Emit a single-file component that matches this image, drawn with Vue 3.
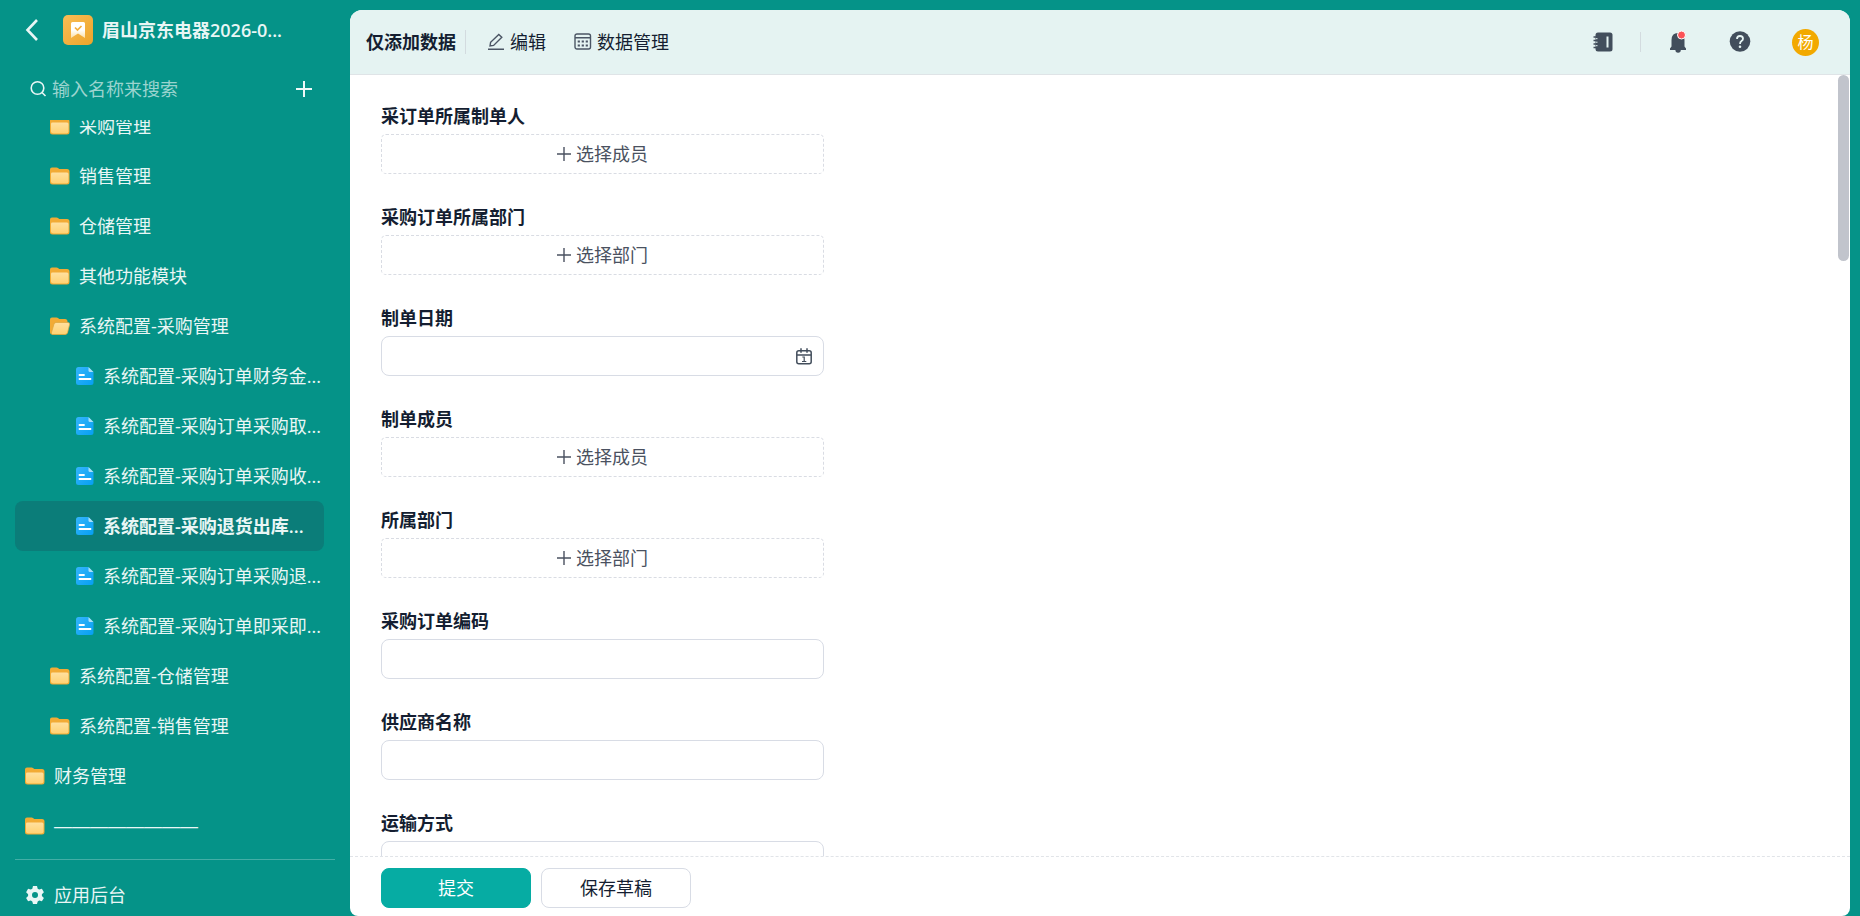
<script setup>
const nodes = [
  { text: '采购管理', icon: 'folder', level: 2 },
  { text: '销售管理', icon: 'folder', level: 2 },
  { text: '仓储管理', icon: 'folder', level: 2 },
  { text: '其他功能模块', icon: 'folder', level: 2 },
  { text: '系统配置-采购管理', icon: 'open', level: 2 },
  { text: '系统配置-采购订单财务金...', icon: 'doc', level: 3 },
  { text: '系统配置-采购订单采购取...', icon: 'doc', level: 3 },
  { text: '系统配置-采购订单采购收...', icon: 'doc', level: 3 },
  { text: '系统配置-采购退货出库...', icon: 'doc', level: 3, active: true },
  { text: '系统配置-采购订单采购退...', icon: 'doc', level: 3 },
  { text: '系统配置-采购订单即采即...', icon: 'doc', level: 3 },
  { text: '系统配置-仓储管理', icon: 'folder', level: 2 },
  { text: '系统配置-销售管理', icon: 'folder', level: 2 },
  { text: '财务管理', icon: 'folder', level: 1 },
  { text: '————————', icon: 'folder', level: 1, dashes: true },
]

const fields = [
  { label: '采订单所属制单人', pick: '选择成员' },
  { label: '采购订单所属部门', pick: '选择部门' },
  { label: '制单日期', date: true },
  { label: '制单成员', pick: '选择成员' },
  { label: '所属部门', pick: '选择部门' },
  { label: '采购订单编码' },
  { label: '供应商名称' },
  { label: '运输方式' },
]
</script>

<template>
  <div class="app">
    <svg class="defs" width="0" height="0" aria-hidden="true">
      <defs>
        <linearGradient id="g-folder" x1="0" y1="0" x2="0" y2="1">
          <stop offset="0" stop-color="#ffe0a0" /><stop offset="1" stop-color="#ffd272" />
        </linearGradient>
        <linearGradient id="g-doc" x1="0" y1="0" x2="1" y2="1">
          <stop offset="0" stop-color="#35b5fb" /><stop offset="1" stop-color="#069ff2" />
        </linearGradient>
        <linearGradient id="g-flag" x1="0" y1="0" x2="0" y2="1">
          <stop offset="0.5" stop-color="#fff" /><stop offset="1" stop-color="#fbdfa6" />
        </linearGradient>
      </defs>
    </svg>

    <aside class="side">
      <div class="brand">
        <button class="plain back" aria-label="返回">
          <svg width="14" height="24" viewBox="0 0 14 24"><path d="M12 2 2.500 12 12 22" fill="none" stroke="#e9f6f5" stroke-width="2.600" /></svg>
        </button>
        <span class="logo">
          <svg width="16" height="18" viewBox="0 0 16 18">
            <path d="M1 2.500Q1 1 2.500 1h11Q15 1 15 2.500V17l-7-4.500L1 17z" fill="url(#g-flag)" />
            <path d="m5 6.500 2.500 2.500L11.500 5" fill="none" stroke="#f3ae3d" stroke-width="1.700" />
          </svg>
        </span>
        <span class="brand-name">眉山京东电器2026-0...</span>
      </div>

      <div class="search">
        <svg width="18" height="18" viewBox="0 0 18 18" fill="none" stroke="#e9f6f5" stroke-width="1.600"><circle cx="8.500" cy="8" r="6.300" /><path d="m13 12.500 3.500 3.500" /></svg>
        <input type="text" aria-label="输入名称来搜索" placeholder="输入名称来搜索" />
        <button class="plain add" aria-label="新建">
          <svg width="18" height="18" viewBox="0 0 18 18"><path d="M9 1v16M1 9h16" stroke="#eef8f7" stroke-width="2" /></svg>
        </button>
      </div>

      <nav class="tree">
        <a v-for="(n, i) in nodes" :key="i" href="#" class="node" :class="['level-' + n.level, { active: n.active }]">
          <svg v-if="n.icon === 'folder'" width="20" height="18" viewBox="0 0 20 18">
            <path d="M0 2.500Q0 .5 2 .5h4.500q1 0 1.800.8L9.300 2H17q2.500 0 2.500 2.500V15q0 2.500-2.500 2.500H2.500Q0 17.500 0 15z" fill="#f2ab35" />
            <path d="M1 6.500Q1 5.500 2.500 5.500h14.500q1.500 0 1.500 1.500v7.500q0 2-2 2h-13q-2.500 0-2.500-2z" fill="url(#g-folder)" />
          </svg>
          <svg v-else-if="n.icon === 'open'" width="20" height="18" viewBox="0 0 20 18">
            <path d="M0 2.500Q0 .5 2 .5h4.500q1 0 1.800.8L9.300 2H15q2.500 0 2.500 2.500V15q0 2.500-2.500 2.500H2.500Q0 17.500 0 15z" fill="#f2ab35" />
            <path d="M6 5.500h12q2 0 1.600 2l-2 8q-.5 2-2.600 2H2.500q-1.500 0-1-2L4 7q.5-1.500 2-1.500z" fill="url(#g-folder)" stroke="#dca53b" stroke-width=".7" />
          </svg>
          <svg v-else width="18" height="18" viewBox="0 0 18 18">
            <path d="M0 2.500Q0 0 2.500 0H12l5.500 5.500v10Q17.500 18 15 18H2.500Q0 18 0 15.500z" fill="url(#g-doc)" />
            <path d="M12.500 0 17.500 5h-3.500q-1.500 0-1.500-1.500z" fill="#a6e0fb" />
            <path d="M3.500 8h4.500M3.500 12h11" stroke="#fff" stroke-width="1.800" stroke-linecap="round" />
          </svg>
          <span :class="{ dashes: n.dashes }">{{ n.text }}</span>
        </a>
      </nav>

      <a href="#" class="backend">
        <svg width="20" height="20" viewBox="0 0 20 20">
          <path fill="#e9f6f5" fill-rule="evenodd" d="M8 1h4l.7 2.700 1.500.9 2.700-.8 2 3.400-2 2v1.700l2 2-2 3.400-2.700-.8-1.500.9L12 19H8l-.7-2.600-1.500-.9-2.700.8-2-3.400 2-2V9.200l-2-2 2-3.400 2.700.8 1.500-.9zM10 7a3 3 0 1 0 0 6 3 3 0 0 0 0-6z" />
        </svg>
        <span>应用后台</span>
      </a>
    </aside>

    <main class="panel">
      <header class="top">
        <h1>仅添加数据</h1>
        <span class="bar first"></span>
        <button class="plain tab">
          <svg width="18" height="18" viewBox="0 0 18 18" fill="none" stroke="#4b5564" stroke-width="1.400"><path d="M1 16.300h16M3 13l.6-3.700L11.800 1.500l3 2.800L6.600 12.400z" /></svg>
          编辑
        </button>
        <button class="plain tab">
          <svg width="18" height="18" viewBox="0 0 18 18" fill="none" stroke="#4b5564" stroke-width="1.400"><rect x="1" y="1" width="15.500" height="15" rx="2" /><path d="M1 4.700h15.500" /><path d="M3.700 8.500h10.200M3.700 12.500h10.200" stroke-width="2" stroke-dasharray="2.200 1.800" /></svg>
          数据管理
        </button>
        <div class="tools">
          <button class="plain" aria-label="通讯录">
            <svg width="20" height="20" viewBox="0 0 20 20"><rect x="2.500" y=".5" width="17" height="19" rx="2.500" fill="#424e5c" /><path d="M.5 5h4M.5 8.500h4M.5 12h4M.5 15.500h4" stroke="#424e5c" stroke-width="1.500" /><path d="M3 6.700h1.500M3 10.200h1.500M3 13.700h1.500" stroke="#e5f3f2" stroke-width="1" /><path d="M14.500 4.500v11" stroke="#e5f3f2" stroke-width="2" /></svg>
          </button>
          <span class="bar second"></span>
          <button class="plain" aria-label="通知">
            <svg width="20" height="24" viewBox="0 0 20 24"><path d="M9 3q6.500 0 6.500 7v6.500l1.500 2v1.500h-5.200a2.700 2.700 0 0 1-5.400 0H1v-1.500l1.500-2V10Q2.500 3 9 3z" fill="#424e5c" /><circle cx="12.500" cy="5" r="4" fill="#fb5257" stroke="#fff" stroke-width="1" /></svg>
          </button>
          <button class="plain help" aria-label="帮助">
            <svg width="22" height="22" viewBox="0 0 22 22"><circle cx="11" cy="10.500" r="10.300" fill="#424e5c" /><path d="M8 8Q8 5 11 5t3 2.700q0 1.300-1.500 2.300T11 13" fill="none" stroke="#e5f3f2" stroke-width="1.800" /><circle cx="11" cy="15.800" r="1.300" fill="#e5f3f2" /></svg>
          </button>
          <button class="plain avatar">杨</button>
        </div>
      </header>

      <form class="form" @submit.prevent>
        <div class="fields">
          <div v-for="(f, i) in fields" :key="i" class="field">
            <label :for="'field-' + i">{{ f.label }}</label>
            <button v-if="f.pick" :id="'field-' + i" type="button" class="pick">
              <svg width="14" height="14" viewBox="0 0 14 14"><path d="M7 0v14M0 7h14" stroke="#4a5160" stroke-width="1.400" /></svg>
              {{ f.pick }}
            </button>
            <div v-else class="box">
              <input :id="'field-' + i" type="text" />
              <svg v-if="f.date" width="16" height="17" viewBox="0 0 16 17" fill="none" stroke="#434e5c" stroke-width="1.500"><rect x=".8" y="2.700" width="14.400" height="13" rx="2" /><path d="M1 7h14M5 .3v4.500M11 .3v4.500" /><path d="M6.300 9h1.900v4.500M6 13.500h4.300" stroke-width="1.200" /></svg>
            </div>
          </div>
        </div>
        <span class="thumb"></span>
      </form>

      <footer class="actions">
        <button class="btn primary">提交</button>
        <button class="btn">保存草稿</button>
      </footer>
    </main>
  </div>
</template>

<style>
html, body { margin: 0; }
</style>

<style scoped>
* { box-sizing: border-box; }
.app {
  display: flex;
  height: 100vh;
  padding: 0 10px 0 0;
  background: #059388;
  color: #141e31;
  font: 400 18px/24px "Open Sans", "Noto Sans CJK SC", sans-serif;
  overflow: hidden;
}
.defs { position: absolute; }
svg { flex: none; display: block; }
button, input { font: inherit; color: inherit; }
.plain { padding: 0; border: 0; background: none; cursor: pointer; }
a { color: inherit; text-decoration: none; }

.side { width: 350px; flex: none; display: flex; flex-direction: column; color: #e9f6f5; white-space: nowrap; }
.brand { display: flex; align-items: center; height: 60px; padding-left: 25px; }
.back { margin-right: 24px; }
.logo {
  display: flex; align-items: center; justify-content: center;
  width: 30px; height: 30px; margin-right: 9px; border-radius: 5px;
  background: linear-gradient(135deg, #f9bd55, #eda42b);
}
.brand-name { font-weight: 600; }
.search { display: flex; align-items: center; height: 60px; padding: 0 37px 2px 29px; }
.search input { flex: 1; min-width: 0; height: 32px; margin: 0; padding: 0 0 0 5px; border: 0; outline: 0; background: none; }
.search input::placeholder { color: #9bd4cf; opacity: 1; }
.tree { flex: 1; min-height: 0; display: flex; flex-direction: column; justify-content: flex-end; overflow: hidden; margin: 0 15px 8px; }
.node { display: flex; align-items: center; flex: none; height: 50px; margin-right: 11px; border-radius: 8px; gap: 9px; }
.level-1 { padding-left: 10px; }
.level-2 { padding-left: 35px; }
.level-3 { padding-left: 61px; }
.dashes { font-family: "Liberation Sans", sans-serif; }
.active { background: #0b7d79; font-weight: 600; }
.backend { display: flex; align-items: center; gap: 9px; height: 57px; margin: 0 15px; padding: 14px 0 0 10px; border-top: 1px solid #43aea6; }

.panel { flex: 1; min-width: 0; display: flex; flex-direction: column; margin-top: 10px; border-radius: 12px 12px 8px 8px; background: #fff; overflow: hidden; }
.top { display: flex; align-items: center; flex: none; height: 65px; padding: 0 31px 0 16px; background: #e5f3f2; border-bottom: 1px solid #dfe4e7; }
h1 { margin: 0; font-size: 18px; line-height: 24px; font-weight: 600; }
.bar { width: 1px; height: 24px; background: #d3dbdf; }
.first { margin: 0 21px 0 9px; }
.tab { display: flex; align-items: center; gap: 5px; margin-right: 28px; }
.tools { display: flex; align-items: center; margin-left: auto; }
.second { height: 20px; margin: 0 28px 0 27px; }
.help { margin: 0 41px 0 40px; }
.avatar { width: 27px; height: 27px; border-radius: 50%; background: #f2a900; color: #fff; font-size: 16px; line-height: 27px; }

.form { flex: 1; min-height: 0; position: relative; overflow: hidden; padding: 29px 31px 0; }
.fields { display: flex; flex-direction: column; gap: 31px; width: 100%; max-width: 443px; }
.field { display: flex; flex-direction: column; gap: 6px; }
.field label { font-weight: 600; line-height: 24px; }
.pick { display: flex; align-items: center; justify-content: center; gap: 5px; height: 40px; border: 1px dashed #d9dce3; border-radius: 5px; background: #fff; color: #4a5160; }
.box { display: flex; align-items: center; height: 40px; padding-right: 11px; border: 1px solid #d8dce5; border-radius: 8px; background: #fff; }
.box input { flex: 1; min-width: 0; height: 36px; padding: 0 12px; border: 0; outline: 0; background: none; }
.thumb { position: absolute; top: 0; right: 1px; width: 11px; height: 186px; border-radius: 6px; background: #c1c4cc; }
.actions { display: flex; flex: none; gap: 10px; height: 60px; padding: 11px 31px 0; border-top: 1px dashed #e1e4e8; }
.btn { width: 150px; height: 40px; padding: 0; border: 1px solid #d8dce5; border-radius: 8px; background: #fff; cursor: pointer; }
.primary { border-color: #06aca3; background: #06aca3; color: #fff; }
</style>
